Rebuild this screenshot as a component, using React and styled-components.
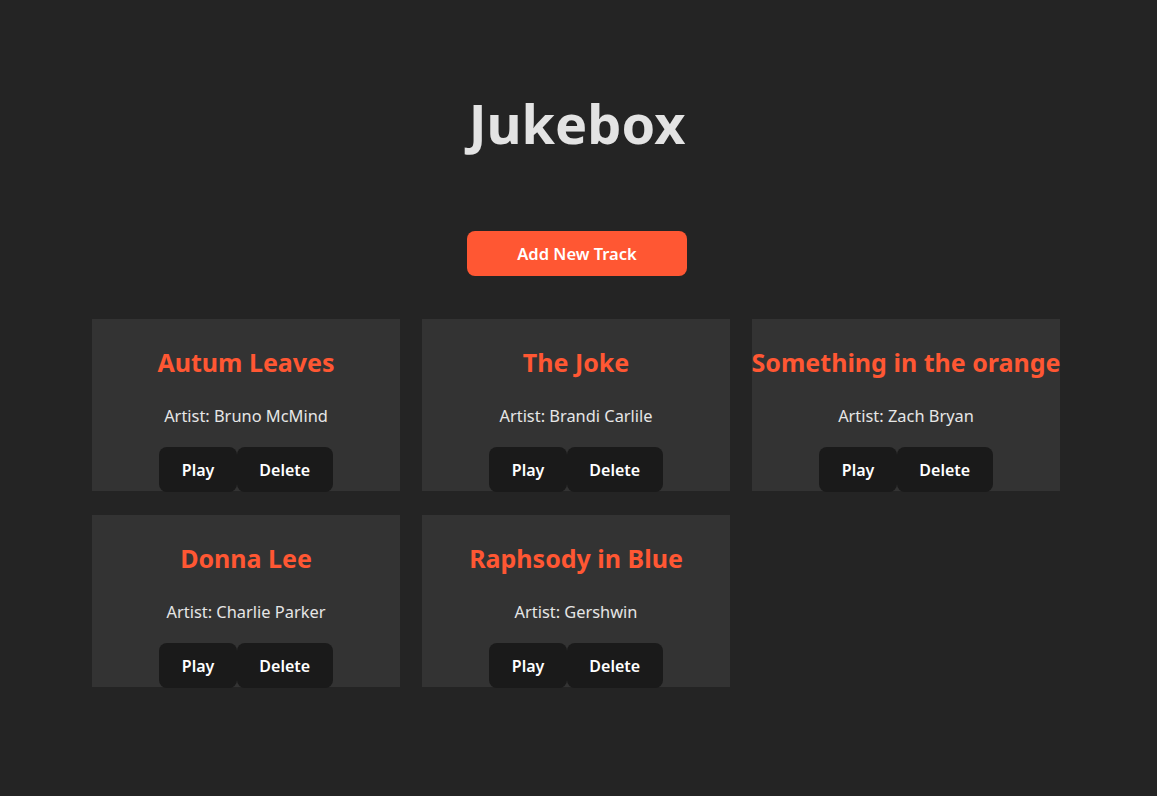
import React from "react";
import styled, { createGlobalStyle } from "styled-components";

const GlobalStyle = createGlobalStyle`
  html, body {
    margin: 0;
    padding: 0;
    background: #242424;
  }
  body {
    font-family: "Noto Sans", "Open Sans", sans-serif;
    color: rgba(255, 255, 255, 0.87);
    line-height: 1.5;
    min-height: 796px;
  }
`;

const Page = styled.div`
  display: flex;
  flex-direction: column;
  align-items: center;
  padding: 95px 3px 40px 0;
  text-align: center;
`;

const Title = styled.h1`
  margin: 0;
  font-size: 54px;
  line-height: 56px;
  font-weight: 700;
  color: #e3e3e3;
`;

const AddButton = styled.button`
  margin-top: 80px;
  width: 220px;
  height: 45px;
  border: none;
  border-radius: 8px;
  background: #ff5733;
  color: #ffffff;
  font-family: inherit;
  font-size: 16.5px;
  font-weight: 600;
  cursor: pointer;
`;

const Grid = styled.div`
  margin-top: 43px;
  align-self: stretch;
  display: grid;
  grid-template-columns: repeat(3, 308px);
  column-gap: 22px;
  row-gap: 24px;
  padding-left: 92px;
`;

const Card = styled.div`
  background: #333333;
  height: 172px;
  padding-top: 25px;
  box-sizing: border-box;
  display: flex;
  flex-direction: column;
  align-items: center;
`;

const TrackName = styled.h2`
  margin: 0 0 24px;
  font-size: 25px;
  line-height: 36px;
  font-weight: 700;
  color: #ff5733;
  white-space: nowrap;
`;

const Artist = styled.p`
  margin: 0 0 19px;
  font-size: 16.4px;
  line-height: 24px;
  color: #e6e6e6;
`;

const Actions = styled.div`
  display: flex;
`;

const CardButton = styled.button`
  border: 1px solid transparent;
  border-radius: 8px;
  background: #1a1a1a;
  color: #ffffff;
  padding: 9.6px 21.5px;
  font-family: inherit;
  font-size: 16px;
  line-height: 24px;
  font-weight: 600;
  cursor: pointer;
`;

const tracks = [
  { title: "Autum Leaves", artist: "Bruno McMind" },
  { title: "The Joke", artist: "Brandi Carlile" },
  { title: "Something in the orange", artist: "Zach Bryan" },
  { title: "Donna Lee", artist: "Charlie Parker" },
  { title: "Raphsody in Blue", artist: "Gershwin" },
];

export default function App() {
  return (
    <>
      <GlobalStyle />
      <Page>
        <Title>Jukebox</Title>
        <AddButton>Add New Track</AddButton>
        <Grid>
          {tracks.map((t) => (
            <Card key={t.title}>
              <TrackName>{t.title}</TrackName>
              <Artist>Artist: {t.artist}</Artist>
              <Actions>
                <CardButton>Play</CardButton>
                <CardButton>Delete</CardButton>
              </Actions>
            </Card>
          ))}
        </Grid>
      </Page>
    </>
  );
}
